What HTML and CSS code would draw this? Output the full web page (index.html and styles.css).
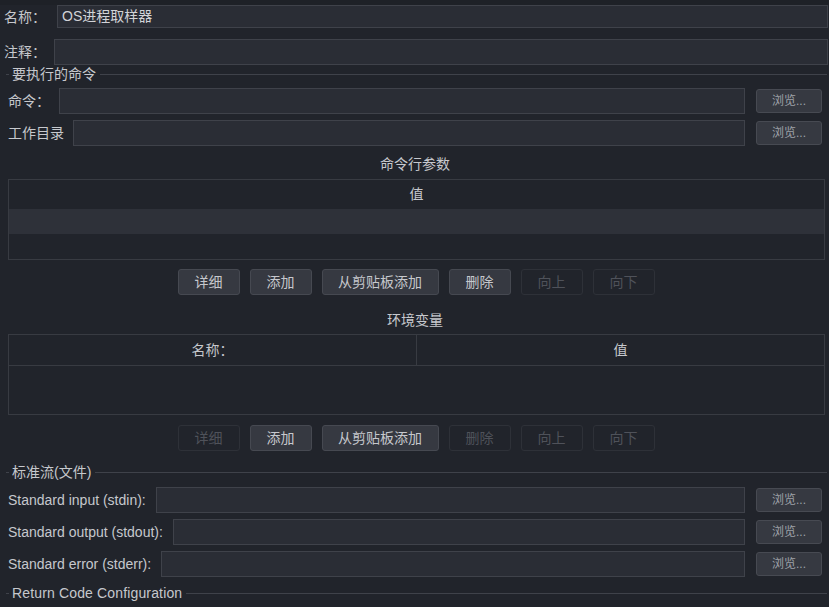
FILE: index.html
```html
<!DOCTYPE html>
<html lang="zh-CN">
<head>
    <meta charset="UTF-8">
    <meta name="viewport" content="width=device-width, initial-scale=1.0">
    <title>OS进程取样器</title>
    <link rel="stylesheet" href="styles.css">
</head>
<body>
    <div class="top-strip"></div>
    <div class="panel">
        <div class="row row-name">
            <span class="label label-name">名称：</span>
            <div class="field">OS进程取样器</div>
        </div>
        <div class="row row-comment">
            <span class="label label-comment">注释：</span>
            <div class="field field-tall"></div>
        </div>

        <div class="group-title">要执行的命令</div>
        <div class="cmd-rows">
            <div class="row row-file">
                <span class="label">命令：</span>
                <div class="field field-tall"></div>
                <div class="browse">浏览...</div>
            </div>
            <div class="row row-file">
                <span class="label">工作目录</span>
                <div class="field field-tall"></div>
                <div class="browse">浏览...</div>
            </div>
        </div>

        <div class="section-title title-args">命令行参数</div>
        <div class="table">
            <div class="table-head">
                <div class="cell">值</div>
            </div>
            <div class="table-row selected"></div>
        </div>
        <div class="button-bar">
            <div class="btn">详细</div>
            <div class="btn">添加</div>
            <div class="btn btn-wide">从剪贴板添加</div>
            <div class="btn">删除</div>
            <div class="btn disabled">向上</div>
            <div class="btn disabled">向下</div>
        </div>

        <div class="section-title title-env">环境变量</div>
        <div class="table">
            <div class="table-head head-lined">
                <div class="cell">名称：</div>
                <div class="cell">值</div>
            </div>
        </div>
        <div class="button-bar">
            <div class="btn disabled">详细</div>
            <div class="btn">添加</div>
            <div class="btn btn-wide">从剪贴板添加</div>
            <div class="btn disabled">删除</div>
            <div class="btn disabled">向上</div>
            <div class="btn disabled">向下</div>
        </div>

        <div class="group-title group-streams">标准流(文件)</div>
        <div class="stream-rows">
            <div class="row row-file">
                <span class="label">Standard input (stdin):</span>
                <div class="field field-tall"></div>
                <div class="browse">浏览...</div>
            </div>
            <div class="row row-file">
                <span class="label">Standard output (stdout):</span>
                <div class="field field-tall"></div>
                <div class="browse">浏览...</div>
            </div>
            <div class="row row-file">
                <span class="label">Standard error (stderr):</span>
                <div class="field field-tall"></div>
                <div class="browse">浏览...</div>
            </div>
        </div>

        <div class="group-title group-return">Return Code Configuration</div>
    </div>
</body>
</html>
```

FILE: styles.css
```css
* {
    margin: 0;
    padding: 0;
    box-sizing: border-box;
}
html, body {
    height: 100%;
}
body {
    background-color: #21242b;
    color: #c6c8cd;
    font-family: "Liberation Sans", "Noto Sans CJK SC", sans-serif;
    font-size: 14px;
    overflow: hidden;
}
.top-strip {
    height: 5px;
    background-color: #1e2127;
}
.panel {
    padding: 0 1px 0 4px;
}
.row {
    display: flex;
    align-items: center;
}
.label {
    white-space: nowrap;
    line-height: 16px;
}
.field {
    flex: 1;
    height: 23px;
    background-color: #2a2d35;
    border: 1px solid #3f424a;
    color: #d2d4d8;
    padding-left: 4px;
    line-height: 21px;
}
.field-tall {
    height: 26px;
}
.label-name {
    width: 53px;
}
.row-comment {
    margin-top: 11px;
}
.label-comment {
    width: 50px;
}

/* #region 分组标题 */
.group-title {
    display: flex;
    align-items: center;
    height: 14px;
    line-height: 14px;
    margin: 2px 1px 0 2px;
}
.group-title::before {
    content: '';
    width: 3px;
    height: 1px;
    margin-right: 3px;
    background-color: #3f424a;
}
.group-title::after {
    content: '';
    flex: 1;
    height: 1px;
    margin-left: 4px;
    background-color: #3f424a;
}
.group-streams {
    margin-top: 14px;
}
.group-return {
    margin-top: 9px;
    letter-spacing: 0.15px;
}
/* #endregion 分组标题 */

.cmd-rows,
.stream-rows {
    display: flex;
    flex-direction: column;
    gap: 6px;
    margin-top: 7px;
    padding-left: 4px;
}
.stream-rows {
    margin-top: 8px;
}
.row-file .label {
    margin-right: 9px;
}
.stream-rows .label {
    margin-right: 10px;
}
.browse {
    width: 66px;
    height: 24px;
    margin: 0 6px 0 11px;
    background-color: #363941;
    border: 1px solid #474a52;
    border-radius: 3px;
    color: #9fa2a9;
    font-size: 12px;
    text-align: center;
    line-height: 22px;
}

.section-title {
    height: 14px;
    line-height: 14px;
    text-align: center;
    padding-right: 2px;
}
.title-args {
    margin-top: 11px;
}
.title-env {
    margin-top: 18px;
}

/* #region 表格 */
.table {
    height: 81px;
    margin: 8px 3px 0 4px;
    border: 1px solid #383b42;
}
.title-env + .table {
    margin-top: 7px;
}
.table-head {
    display: flex;
    height: 29px;
}
.head-lined {
    height: 31px;
    border-bottom: 1px solid #383b42;
}
.cell {
    flex: 1;
    text-align: center;
    line-height: 29px;
}
.head-lined .cell {
    line-height: 30px;
}
.head-lined .cell + .cell {
    border-left: 1px solid #383b42;
}
.table-row {
    height: 25px;
}
.table-row.selected {
    background-color: #2e3139;
}
/* #endregion 表格 */

.button-bar {
    display: flex;
    justify-content: center;
    gap: 10px;
    margin-top: 9px;
}
.title-env + .table + .button-bar {
    margin-top: 10px;
}
.btn {
    width: 62px;
    height: 26px;
    background-color: #363941;
    border: 1px solid #464951;
    border-radius: 3px;
    text-align: center;
    line-height: 24px;
    color: #c6c8cd;
    user-select: none;
}
.btn-wide {
    width: 117px;
}
.btn.disabled {
    background-color: transparent;
    border-color: #2e3138;
    color: #4f525a;
}
```
